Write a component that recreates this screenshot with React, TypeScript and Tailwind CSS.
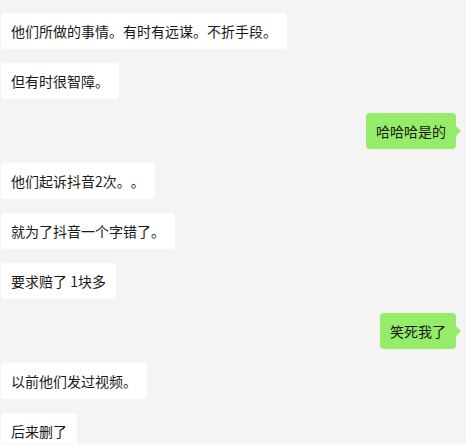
import React from 'react';

interface Message {
  id: number;
  text: string;
  mine: boolean;
}

const messages: Message[] = [
  { id: 1, text: '他们所做的事情。有时有远谋。不折手段。', mine: false },
  { id: 2, text: '但有时很智障。', mine: false },
  { id: 3, text: '哈哈哈是的', mine: true },
  { id: 4, text: '他们起诉抖音2次。。', mine: false },
  { id: 5, text: '就为了抖音一个字错了。', mine: false },
  { id: 6, text: '要求赔了 1块多', mine: false },
  { id: 7, text: '笑死我了', mine: true },
  { id: 8, text: '以前他们发过视频。', mine: false },
  { id: 9, text: '后来删了', mine: false },
];

function Bubble({ msg }: { msg: Message }) {
  if (msg.mine) {
    return (
      <div className="flex justify-end pr-[10px]">
        <div className="relative h-[36px] flex items-center px-[10px] rounded-[4px] bg-[#95ec69] text-[#191919]">
          <span className="whitespace-pre">{msg.text}</span>
          {/* little tail pointing at the avatar side */}
          <span className="absolute right-[-5px] top-1/2 -translate-y-1/2 w-0 h-0 border-y-[5px] border-y-transparent border-l-[5px] border-l-[#95ec69]"></span>
        </div>
      </div>
    );
  }
  return (
    <div className="flex justify-start pl-[1px]">
      <div className="h-[36px] flex items-center px-[10px] rounded-[4px] bg-white text-[#191919]">
        <span className="whitespace-pre">{msg.text}</span>
      </div>
    </div>
  );
}

export default function App() {
  return (
    <div
      className="w-[466px] h-[445px] flex flex-col bg-[#fafafa]"
      style={{ fontFamily: '"Noto Sans CJK SC", "Liberation Sans", sans-serif' }}
    >
      {/* keep full-width punctuation from being squeezed (。。) */}
      <div className="h-[443px] overflow-hidden bg-[#f4f4f4] pt-[13px] flex flex-col gap-[14px] text-[14px] leading-[20px] shrink-0 [text-spacing-trim:space-all] [font-feature-settings:'chws'_0,'halt'_0]">
        {messages.map(m => (
          <Bubble key={m.id} msg={m} />
        ))}
      </div>
    </div>
  );
}
